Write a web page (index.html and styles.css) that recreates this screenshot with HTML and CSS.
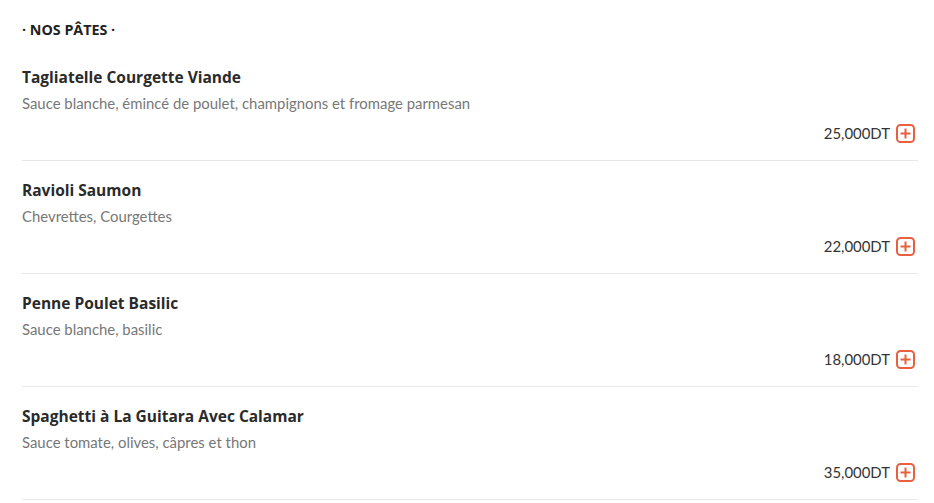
FILE: index.html
```html
<!DOCTYPE html>
<html lang="fr">
<head>
<meta charset="utf-8">
<link rel="stylesheet" href="styles.css">
</head>
<body>
<div class="menu">
  <h2 class="section">· NOS PÂTES ·</h2>
  <div class="item">
    <div class="title">Tagliatelle Courgette Viande</div>
    <div class="desc">Sauce blanche, émincé de poulet, champignons et fromage parmesan</div>
    <div class="price-row"><span class="price">25,000DT</span><span class="add"><svg viewBox="0 0 19 19" width="19" height="19"><rect x="1" y="1" width="17" height="17" rx="3.5" fill="none" stroke="#e8603f" stroke-width="2"/><path d="M9.5 4.5v10M4.5 9.5h10" stroke="#e8603f" stroke-width="2"/></svg></span></div>
  </div>
  <div class="item">
    <div class="title">Ravioli Saumon</div>
    <div class="desc">Chevrettes, Courgettes</div>
    <div class="price-row"><span class="price">22,000DT</span><span class="add"><svg viewBox="0 0 19 19" width="19" height="19"><rect x="1" y="1" width="17" height="17" rx="3.5" fill="none" stroke="#e8603f" stroke-width="2"/><path d="M9.5 4.5v10M4.5 9.5h10" stroke="#e8603f" stroke-width="2"/></svg></span></div>
  </div>
  <div class="item">
    <div class="title">Penne Poulet Basilic</div>
    <div class="desc">Sauce blanche, basilic</div>
    <div class="price-row"><span class="price">18,000DT</span><span class="add"><svg viewBox="0 0 19 19" width="19" height="19"><rect x="1" y="1" width="17" height="17" rx="3.5" fill="none" stroke="#e8603f" stroke-width="2"/><path d="M9.5 4.5v10M4.5 9.5h10" stroke="#e8603f" stroke-width="2"/></svg></span></div>
  </div>
  <div class="item">
    <div class="title">Spaghetti à La Guitara Avec Calamar</div>
    <div class="desc">Sauce tomate, olives, câpres et thon</div>
    <div class="price-row"><span class="price">35,000DT</span><span class="add"><svg viewBox="0 0 19 19" width="19" height="19"><rect x="1" y="1" width="17" height="17" rx="3.5" fill="none" stroke="#e8603f" stroke-width="2"/><path d="M9.5 4.5v10M4.5 9.5h10" stroke="#e8603f" stroke-width="2"/></svg></span></div>
  </div>
</div>
</body>
</html>
```
FILE: styles.css
```css
html, body {
  margin: 0;
  padding: 0;
  background: #fff;
}
body {
  font-family: Lato, "Noto Sans", sans-serif;
  color: #2b2b2b;
}
.menu {
  padding: 20px 16px 0 22px;
}
.section {
  margin: 0 0 27px;
  font-family: "Open Sans", Lato, sans-serif;
  font-size: 14.3px;
  line-height: 20px;
  font-weight: 700;
  color: #222;
}
.item {
  padding: 0 0 17px;
  border-bottom: 1px solid #e8e8e8;
}
.item + .item {
  padding-top: 19px;
}
.title {
  font-family: "Open Sans", Lato, sans-serif;
  font-size: 15.5px;
  line-height: 20px;
  font-weight: 700;
  color: #2a2a2a;
  margin-bottom: 6px;
}
.desc {
  font-size: 14.9px;
  line-height: 20px;
  color: #777;
  margin-bottom: 10px;
}
.price-row {
  display: flex;
  justify-content: flex-end;
  align-items: center;
  gap: 6px;
  height: 20px;
  padding-right: 3px;
}
.price {
  font-size: 14.9px;
  color: #333;
}
.add {
  display: flex;
  width: 19px;
  height: 19px;
}
```
